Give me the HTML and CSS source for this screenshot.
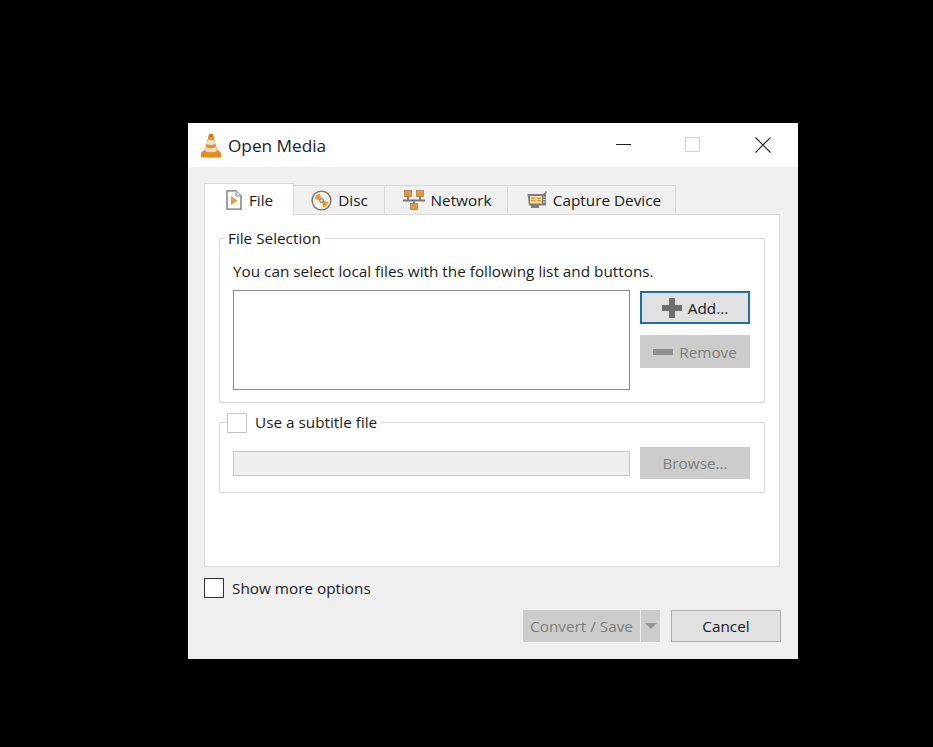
FILE: index.html
```html
<html lang="en">
  <head>
    <meta charset="UTF-8" />
    <title>Open Media</title>
    <link rel="stylesheet" href="styles.css">
  </head>

  <body>
    <div class="window">
      <div class="titleBar">
        <svg class="appIcon" width="22" height="25" viewBox="0 0 22 25">
          <path d="M1 20 L4 17 H18 L21 20 V24.5 H1 Z" fill="#e68a1e"/>
          <path d="M9 1 H13 L18 20.5 Q11 23.5 4 20.5 Z" fill="#ee8d1c"/>
          <path d="M7.9 6.5 Q11 8 14.1 6.5 L15.2 11 Q11 13 6.8 11 Z" fill="#e9e2d6"/>
          <path d="M6 14 Q11 16.4 16 14 L17 18 Q11 20.6 5 18 Z" fill="#f1dfc6"/>
          <path d="M9.4 1 H12.6 L13.3 4 H8.7 Z" fill="#d9741a"/>
        </svg>
        <span class="titleText">Open Media</span>
        <div class="windowButtons">
          <span class="minBtn"></span>
          <span class="maxBtn"></span>
          <svg class="closeBtn" width="16" height="16" viewBox="0 0 16 16">
            <path d="M.5 .5 L15.5 15.5 M15.5 .5 L.5 15.5" stroke="#222" stroke-width="1.1" fill="none"/>
          </svg>
        </div>
      </div>

      <div class="dialog">
        <div class="tabs">
          <div class="tab tabActive tabFile">
            <svg width="18" height="20" viewBox="0 0 18 20">
              <path d="M2 .8 H11 L16 6 V19.2 H2 Z" fill="#fff" stroke="#6f6f6f" stroke-width="1.3"/>
              <path d="M11 .8 V6 H16" fill="#e6e6e6" stroke="#8a8a8a"/>
              <path d="M6 6 L12.5 10.5 L6 15 Z" fill="#ee9b35"/>
            </svg>
            <span>File</span>
          </div>
          <div class="tab tabDisc">
            <svg width="21" height="21" viewBox="0 0 21 21">
              <circle cx="10.5" cy="10.5" r="9.4" fill="#f8f3e8" stroke="#7a7268" stroke-width="1.4"/>
              <path d="M10.5 10.5 L3.6 9 A7 7 0 0 1 9 3.6 Z M10.5 10.5 L17.4 12 A7 7 0 0 1 12 17.4 Z" fill="#ec9a38"/>
              <circle cx="10.5" cy="10.5" r="1.9" fill="#ddd" stroke="#666" stroke-width=".9"/>
            </svg>
            <span>Disc</span>
          </div>
          <div class="tab tabNetwork">
            <svg width="22" height="20" viewBox="0 0 22 20">
              <path d="M5 6 V10 M17 6 V10 M0 10.5 H22 M11 10.5 V14" stroke="#77797c" stroke-width="1.8" fill="none"/>
              <rect x="1.5" y=".5" width="7" height="6" fill="#e09a45" stroke="#a8763a" stroke-width=".7"/>
              <rect x="13.5" y=".5" width="7" height="6" fill="#e09a45" stroke="#a8763a" stroke-width=".7"/>
              <rect x="7.5" y="13.5" width="7" height="6" fill="#e09a45" stroke="#a8763a" stroke-width=".7"/>
            </svg>
            <span>Network</span>
          </div>
          <div class="tab tabCapture">
            <svg width="20" height="18" viewBox="0 0 20 18">
              <path d="M.5 3 H19 V14.5 H12 V17 H4 V14.5 H2 Z" fill="#7d7d7d"/>
              <path d="M17 3.5 L19.5 .5" stroke="#777" stroke-width="1.4"/>
              <rect x="3" y="5" width="12" height="7.5" fill="#f7dca4"/>
              <path d="M4 7.2 H8.5 M4 9.8 H8.5 M10 7.2 H14 M10 9.8 H14" stroke="#d99a3c" stroke-width="1.4"/>
              <path d="M16 6 H18.5 M16 8.5 H18.5 M16 11 H18.5" stroke="#d8d8d8"/>
            </svg>
            <span>Capture Device</span>
          </div>
        </div>

        <div class="pane">
          <fieldset class="group groupFile">
            <legend class="groupTitle">File Selection</legend>
            <p class="hint">You can select local files with the following list and buttons.</p>
            <div class="row">
              <div class="fileList"></div>
              <div class="buttonColumn">
                <button class="btn btnFocus">
                  <svg width="20" height="20" viewBox="0 0 20 20"><path d="M7 0 H13 V7 H20 V13 H13 V20 H7 V13 H0 V7 H7 Z" fill="#6e6e6e"/></svg>
                  Add...
                </button>
                <button class="btn btnDisabled">
                  <svg width="20" height="6" viewBox="0 0 20 6"><rect width="20" height="6" fill="#909090"/></svg>
                  Remove
                </button>
              </div>
            </div>
          </fieldset>

          <fieldset class="group groupSubtitle">
            <legend class="groupTitle checkTitle">
              <span class="checkbox checkboxLight"></span>
              Use a subtitle file
            </legend>
            <div class="row rowSubtitle">
              <div class="subtitleInput"></div>
              <button class="btn btnDisabled btnBrowse">Browse...</button>
            </div>
          </fieldset>
        </div>

        <div class="moreOptions">
          <span class="checkbox"></span>
          <span>Show more options</span>
        </div>

        <div class="footer">
          <div class="splitBtn">
            <span class="splitLabel">Convert / Save</span>
            <span class="splitArrow"></span>
          </div>
          <button class="btn btnCancel">Cancel</button>
        </div>
      </div>
    </div>
  </body>
</html>
```

FILE: styles.css
```css
* {
  margin: 0;
  padding: 0;
  box-sizing: border-box;
}
body {
  background-color: #000;
  font-family: "Open Sans", "Noto Sans", sans-serif;
  font-size: 15.3px;
  color: #1a1a1a;
  padding: 123px 0 0 188px;
}
.window {
  width: 610px;
  height: 536px;
  background-color: #f0f0f0;
}
.titleBar {
  height: 44px;
  background-color: #fff;
  display: flex;
  align-items: center;
  padding-left: 12px;
}
.titleText {
  margin-left: 6px;
  font-size: 17.2px;
  color: #222;
}
.windowButtons {
  margin-left: auto;
  display: flex;
  align-items: center;
  padding-right: 27px;
  margin-bottom: 1px;
}
.minBtn {
  width: 15px;
  height: 1px;
  background-color: #222;
}
.maxBtn {
  width: 15px;
  height: 15px;
  border: 1px solid #d0d0d0;
  margin-left: 54px;
}
.closeBtn {
  margin-left: 55px;
}
.dialog {
  padding: 16px 18px 0 16px;
}
.tabs {
  display: flex;
  align-items: flex-end;
  height: 31px;
  position: relative;
  z-index: 1;
}
.tab {
  height: 29px;
  display: flex;
  align-items: center;
  justify-content: center;
  gap: 6px;
  background-color: #f0f0f0;
  border: 1px solid #d9d9d9;
  border-left: none;
  border-bottom: none;
}
.tabActive {
  height: 32px;
  background-color: #fff;
  border-left: 1px solid #d9d9d9;
  margin-bottom: -1px;
}
.tabFile {
  width: 90px;
}
.tabDisc {
  width: 91px;
  padding-left: 1px;
}
.tabNetwork {
  width: 123px;
  padding-left: 2px;
}
.tabCapture {
  width: 168px;
  padding-left: 5px;
}
.pane {
  height: 353px;
  width: 576px;
  background-color: #fff;
  border: 1px solid #d9d9d9;
  padding: 13px 14px 0;
}
.group {
  border: 1px solid #d9d9d9;
  padding: 0 13px;
}
.groupFile {
  height: 175px;
}
.groupSubtitle {
  height: 82px;
  margin-top: 8px;
}
.groupTitle {
  margin-left: -9px;
  padding: 0 4px;
  line-height: 20px;
}
.checkTitle {
  display: flex;
  align-items: center;
  gap: 8px;
  margin-left: -6px;
  padding: 0 4px 0 0;
}
.checkTitle .checkbox {
  margin-top: 2px;
}
.hint {
  margin-top: 13px;
  line-height: 20px;
}
.row {
  display: flex;
  gap: 10px;
  margin-top: 9px;
}
.rowSubtitle {
  margin-top: 14px;
  align-items: center;
}
.fileList {
  width: 397px;
  height: 100px;
  border: 1px solid #8a8a8a;
  background-color: #fff;
}
.buttonColumn {
  display: flex;
  flex-direction: column;
  gap: 11px;
  padding-top: 1px;
}
.btn {
  width: 110px;
  height: 33px;
  display: flex;
  align-items: center;
  justify-content: center;
  gap: 6px;
  font-family: inherit;
  font-size: inherit;
  color: #1a1a1a;
  background-color: #e1e1e1;
  border: 1px solid #adadad;
}
.btnFocus {
  border: 2px solid #1f6fa5;
  box-shadow: inset 0 0 0 1px #cfe6f5;
}
.btnDisabled {
  background-color: #cccccc;
  border-color: #cccccc;
  color: #7d7d7d;
}
.btnBrowse {
  height: 32px;
}
.subtitleInput {
  width: 397px;
  height: 25px;
  background-color: #efefef;
  border: 1px solid #c4c4c4;
}
.checkbox {
  display: inline-block;
  width: 20px;
  height: 20px;
  background-color: #fff;
  border: 1px solid #333;
}
.checkboxLight {
  border-color: #c4c4c4;
}
.moreOptions {
  display: flex;
  align-items: center;
  gap: 8px;
  margin-top: 11px;
  height: 20px;
}
.footer {
  display: flex;
  justify-content: flex-end;
  gap: 11px;
  margin-top: 12px;
  margin-right: -1px;
}
.footer .btn,
.splitBtn {
  height: 32px;
}
.splitBtn {
  width: 137px;
  display: flex;
  background-color: #cccccc;
  color: #7d7d7d;
}
.splitLabel {
  width: 118px;
  display: flex;
  align-items: center;
  justify-content: center;
  border-right: 1px solid #f0f0f0;
}
.splitArrow {
  width: 0;
  height: 0;
  margin: 13px 0 0 4px;
  border-left: 6px solid transparent;
  border-right: 6px solid transparent;
  border-top: 6px solid #959595;
}
```
